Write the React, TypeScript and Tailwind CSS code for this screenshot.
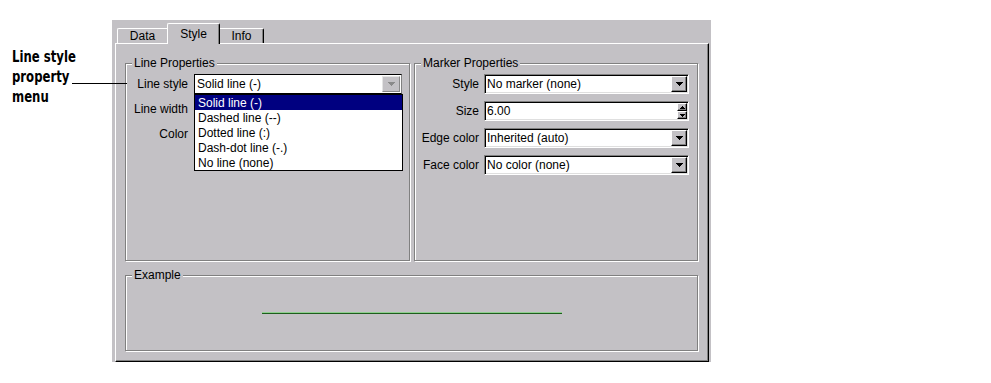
import React from "react";

function Down({ color = "#000" }: { color?: string }) {
  return (
    <svg width="7" height="4" viewBox="0 0 7 4" shapeRendering="crispEdges">
      <path d="M0 0H7V1H6V2H5V3H4V4H3V3H2V2H1V1H0Z" fill={color} />
    </svg>
  );
}

function SmallArrow({ up }: { up?: boolean }) {
  return (
    <svg width="5" height="3" viewBox="0 0 5 3" shapeRendering="crispEdges">
      {up ? (
        <path d="M2 0H3V1H4V2H5V3H0V2H1V1H2Z" fill="#000" />
      ) : (
        <path d="M0 0H5V1H4V2H3V3H2V2H1V1H0Z" fill="#000" />
      )}
    </svg>
  );
}

const sunken =
  "h-[20px] flex items-center bg-white border border-t-[#808080] border-l-[#808080] border-r-white border-b-white shadow-[inset_1px_1px_0_#000,inset_-1px_-1px_0_#dfdfdf] p-[1px]";
const raised =
  "bg-[#c3c1c5] border border-t-white border-l-white border-r-black border-b-black shadow-[inset_-1px_-1px_0_#808080] flex items-center justify-center";

function Combo({ text }: { text: string }) {
  return (
    <div className={`w-[205px] ${sunken}`}>
      <span className="flex-1 pl-[1px] leading-[14px] whitespace-nowrap">{text}</span>
      <div className={`w-[16px] h-[16px] ${raised}`}>
        <Down />
      </div>
    </div>
  );
}

function Spinner({ text }: { text: string }) {
  return (
    <div className={`w-[205px] ${sunken}`}>
      <span className="flex-1 pl-[1px] leading-[14px]">{text}</span>
      <div className="flex flex-col w-[10px] h-[16px]">
        <div className={`h-[8px] ${raised}`}>
          <SmallArrow up />
        </div>
        <div className={`h-[8px] ${raised}`}>
          <SmallArrow />
        </div>
      </div>
    </div>
  );
}

function Group({
  label,
  className,
  children,
}: {
  label: string;
  className: string;
  children?: React.ReactNode;
}) {
  return (
    <div
      className={`relative border border-[#808080] shadow-[1px_1px_0_#fff,inset_1px_1px_0_#fff] ${className}`}
    >
      <span className="absolute left-[6px] top-[-9px] px-[2px] bg-[#c3c1c5] leading-[16px] whitespace-nowrap">
        {label}
      </span>
      {children}
    </div>
  );
}

const lineItems = [
  "Solid line (-)",
  "Dashed line (--)",
  "Dotted line (:)",
  "Dash-dot line (-.)",
  "No line (none)",
];

export default function App() {
  return (
    <div className="relative w-[991px] h-[383px] bg-white flex font-['Liberation_Sans',Arial,sans-serif] text-[12px] text-black">
      {/* annotation */}
      <div className="w-[112px] pl-[12px] pt-[47px]">
        <div className="origin-left scale-x-[0.73] font-bold text-[16px] leading-[20px] font-['DejaVu_Sans',sans-serif] whitespace-nowrap">
          <div>Line style</div>
          <div>property</div>
          <div>menu</div>
        </div>
      </div>

      {/* window */}
      <div className="mt-[20px] w-[599px] h-[342px] bg-[#c3c1c5] flex flex-col pl-[3px] pr-[2px] pt-[3px]">
        {/* tabs */}
        <div className="h-[20px] flex items-end pl-[2px] relative z-10">
          <div className="w-[50px] h-[15px] border-t border-l border-white rounded-tl-[2px] flex items-center justify-center">
            Data
          </div>
          <div className="w-[53px] h-[21px] -mb-[1px] bg-[#c3c1c5] border-t border-l border-r border-t-white border-l-white border-r-black rounded-t-[2px] shadow-[inset_-1px_0_0_#808080] flex items-center justify-center pb-[1px]">
            Style
          </div>
          <div className="w-[44px] h-[15px] border-t border-r border-t-white border-r-black rounded-tr-[2px] shadow-[inset_-1px_0_0_#808080] flex items-center justify-center">
            Info
          </div>
        </div>

        {/* panel */}
        <div className="flex-1 border border-t-white border-l-white border-r-black border-b-black shadow-[inset_-1px_-1px_0_#808080] pt-[19px] pl-[9px] pr-[10px] flex flex-col">
          <div className="h-[198px] flex gap-[4px]">
            <Group label="Line Properties" className="w-[285px] pt-[10px]">
              <div className="flex flex-col gap-[5px]">
                <div className="flex items-center gap-[6px]">
                  <span className="w-[62px] text-right whitespace-nowrap">Line style</span>
                  <div className="relative">
                    <div className="w-[208px] h-[20px] flex items-center bg-white border border-black border-r-[#808080] p-[1px]">
                      <span className="flex-1 pl-[1px] leading-[14px]">Solid line (-)</span>
                      <div className="w-[18px] h-[16px] bg-[#c3c1c5] border border-t-[#e4e4e4] border-l-[#e4e4e4] border-r-[#8a8a8a] border-b-[#8a8a8a] flex items-center justify-center">
                        <Down color="#8a8a8a" />
                      </div>
                    </div>
                    {/* open dropdown list */}
                    <div className="absolute left-0 top-[20px] w-[209px] bg-white border border-black z-20">
                      {lineItems.map((t, i) => (
                        <div
                          key={t}
                          className={`h-[15px] pl-[3px] flex items-center whitespace-nowrap ${
                            i === 0 ? "bg-[#000080] text-white" : ""
                          }`}
                        >
                          {t}
                        </div>
                      ))}
                    </div>
                  </div>
                </div>
                <div className="flex items-center gap-[6px]">
                  <span className="w-[62px] text-right whitespace-nowrap">Line width</span>
                  <div className="w-[208px] h-[20px]" />
                </div>
                <div className="flex items-center gap-[6px]">
                  <span className="w-[62px] text-right whitespace-nowrap">Color</span>
                  <div className="w-[208px] h-[20px]" />
                </div>
              </div>
            </Group>
            <Group label="Marker Properties" className="flex-1 pt-[10px]">
              <div className="flex flex-col gap-[7px]">
                <div className="flex items-center gap-[5px]">
                  <span className="w-[64px] text-right whitespace-nowrap">Style</span>
                  <Combo text="No marker (none)" />
                </div>
                <div className="flex items-center gap-[5px]">
                  <span className="w-[64px] text-right whitespace-nowrap">Size</span>
                  <Spinner text="6.00" />
                </div>
                <div className="flex items-center gap-[5px]">
                  <span className="w-[64px] text-right whitespace-nowrap">Edge color</span>
                  <Combo text="Inherited (auto)" />
                </div>
                <div className="flex items-center gap-[5px]">
                  <span className="w-[64px] text-right whitespace-nowrap">Face color</span>
                  <Combo text="No color (none)" />
                </div>
              </div>
            </Group>
          </div>
          <Group label="Example" className="mt-[14px] h-[76px] flex items-center justify-center">
            <div className="w-[300px] h-[2px] border-t border-t-[#8fcf8f] bg-[#1d5e1d]" />
          </Group>
        </div>
      </div>

      {/* leader line */}
      <div className="absolute left-[72px] top-[83px] w-[55px] h-[1px] bg-black" />
    </div>
  );
}
